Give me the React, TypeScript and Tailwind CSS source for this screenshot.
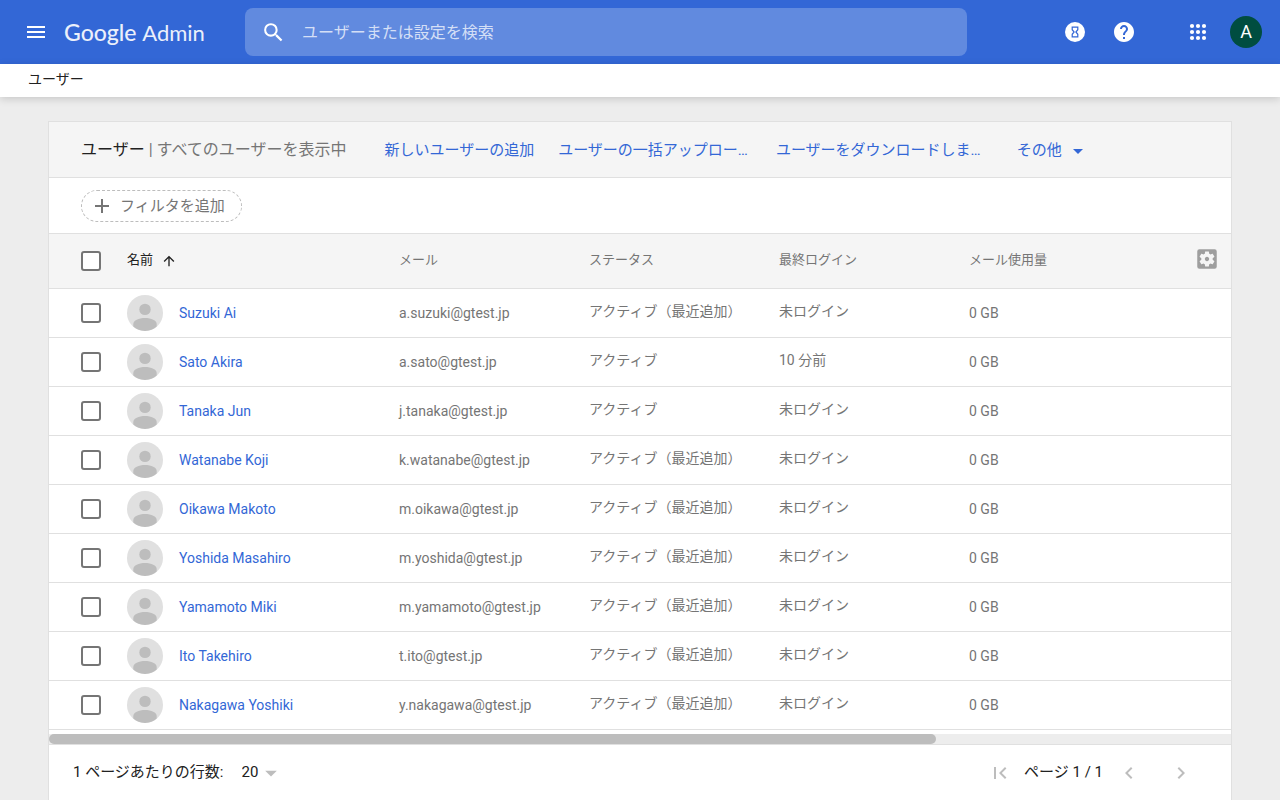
import {
    MdAdd,
    MdArrowDropDown,
    MdArrowUpward,
    MdChevronLeft,
    MdChevronRight,
    MdFirstPage,
    MdHelp,
    MdMenu,
    MdSearch,
    MdSettingsApplications,
} from 'react-icons/md'

const RECENT = 'アクティブ（最近追加）'

const users = [
    { name: 'Suzuki Ai', email: 'a.suzuki@gtest.jp', status: RECENT, login: '未ログイン' },
    { name: 'Sato Akira', email: 'a.sato@gtest.jp', status: 'アクティブ', login: '10 分前' },
    { name: 'Tanaka Jun', email: 'j.tanaka@gtest.jp', status: 'アクティブ', login: '未ログイン' },
    { name: 'Watanabe Koji', email: 'k.watanabe@gtest.jp', status: RECENT, login: '未ログイン' },
    { name: 'Oikawa Makoto', email: 'm.oikawa@gtest.jp', status: RECENT, login: '未ログイン' },
    { name: 'Yoshida Masahiro', email: 'm.yoshida@gtest.jp', status: RECENT, login: '未ログイン' },
    { name: 'Yamamoto Miki', email: 'm.yamamoto@gtest.jp', status: RECENT, login: '未ログイン' },
    { name: 'Ito Takehiro', email: 't.ito@gtest.jp', status: RECENT, login: '未ログイン' },
    { name: 'Nakagawa Yoshiki', email: 'y.nakagawa@gtest.jp', status: RECENT, login: '未ログイン' },
]

function HourglassIcon() {
    return (
        <svg width="20" height="20" viewBox="0 0 20 20" aria-hidden="true">
            <circle cx="10" cy="10" r="10" fill="#fff" />
            <path
                d="M7.2 5.200h5.600v2.500L10.900 10l1.900 2.300v2.500H7.200v-2.500L9.100 10 7.200 7.700z"
                fill="none"
                stroke="#3367d6"
                strokeWidth="1.200"
            />
        </svg>
    )
}

function AppsIcon() {
    return (
        <svg width="18" height="18" viewBox="0 0 18 18" fill="#fff" aria-hidden="true">
            {[3, 9, 15].map((y) => [3, 9, 15].map((x) => <circle key={`${x}-${y}`} cx={x} cy={y} r="2.1" />))}
        </svg>
    )
}

function Avatar() {
    return (
        <svg width="36" height="36" viewBox="0 0 36 36" className="shrink-0" aria-hidden="true">
            <circle cx="18" cy="18" r="18" fill="#e0e0e0" />
            <circle cx="18" cy="14.4" r="5.7" fill="#bdbdbd" />
            <path d="M6.3 31.6V29c0-3.600 5.400-6 11.700-6s11.700 2.400 11.700 6v2.600A18 18 0 0 1 18 36a18 18 0 0 1-11.700-4.400z" fill="#bdbdbd" />
        </svg>
    )
}

function Checkbox({ label }: { label: string }) {
    return (
        <input
            type="checkbox"
            aria-label={label}
            className="block size-5 appearance-none rounded-[3px] border-2 border-[#757575] bg-white checked:bg-[#3367d6]"
        />
    )
}

export default function App() {
    return (
        <div className="min-h-screen bg-[#ededed] font-['Roboto','Noto_Sans_CJK_JP',sans-serif] text-sm text-[#757575]">
            <header className="flex h-16 items-center bg-[#3367d6] pr-[18px] pl-6 text-white">
                <button type="button" aria-label="メニュー">
                    <MdMenu size={24} />
                </button>
                <a href="#" className="ml-4 w-[181px] shrink-0 font-['Lato',sans-serif] text-[23px] leading-8 font-medium whitespace-nowrap text-[#ebf0fb]">
                    Google <span className="text-[22px] font-normal">Admin</span>
                </a>
                <form className="flex h-12 max-w-[722px] flex-1 items-center rounded-lg bg-[#618adf] px-4">
                    <MdSearch size={25} className="shrink-0" />
                    <input
                        type="search"
                        aria-label="検索"
                        placeholder="ユーザーまたは設定を検索"
                        className="ml-4 min-w-0 flex-1 bg-transparent pt-0.5 text-base outline-none placeholder:text-[#d4dff6]"
                    />
                </form>
                <div className="ml-auto flex items-center">
                    <button type="button" aria-label="タスク">
                        <HourglassIcon />
                    </button>
                    <button type="button" aria-label="ヘルプ" className="ml-[27px]">
                        <MdHelp size={24} />
                    </button>
                    <button type="button" aria-label="アプリ" className="ml-[53px]">
                        <AppsIcon />
                    </button>
                    <button type="button" aria-label="アカウント" className="ml-[23px] size-8 rounded-full bg-[#004d40] text-lg">
                        A
                    </button>
                </div>
            </header>

            <nav className="flex h-[33px] items-center bg-white px-7 pb-1 text-sm text-[#212121] shadow-[0_2px_8px_rgba(0,0,0,0.16)]">
                ユーザー
            </nav>

            <main className="mx-12 mt-6 border border-b-0 border-[#e0e0e0] bg-white">
                <div className="flex h-14 items-center border-b border-[#e0e0e0] bg-[#f5f5f5] pl-8 whitespace-nowrap">
                    <h1 className="text-base">
                        <span className="text-[#212121]">ユーザー</span> | すべてのユーザーを表示中
                    </h1>
                    <div className="ml-[38px] flex items-center pt-0.5 text-[15px] text-[#3367d6]">
                        <a href="#">新しいユーザーの追加</a>
                        <a href="#" className="ml-6">ユーザーの一括アップロー…</a>
                        <a href="#" className="ml-7">ユーザーをダウンロードしま…</a>
                        <button type="button" className="ml-9 flex items-center gap-1">
                            その他
                            <MdArrowDropDown size={24} />
                        </button>
                    </div>
                </div>

                <div className="flex h-14 items-center border-b border-[#e0e0e0] pl-8">
                    <button
                        type="button"
                        className="flex h-8 items-center gap-1.5 rounded-full border border-dashed border-[#bdbdbd] pr-4 pl-2 text-[15px]"
                    >
                        <MdAdd size={24} />
                        <span className="pt-0.5">フィルタを追加</span>
                    </button>
                </div>

                <table className="w-full table-fixed text-left">
                    <colgroup>
                        <col className="w-[78px]" />
                        <col className="w-[272px]" />
                        <col className="w-[190px]" />
                        <col className="w-[190px]" />
                        <col className="w-[190px]" />
                        <col />
                    </colgroup>
                    <thead className="bg-[#f5f5f5] text-[13px]">
                        <tr className="h-[54px] border-b border-[#e0e0e0]">
                            <th className="pl-8"><Checkbox label="すべて選択" /></th>
                            <th className="font-normal text-[#212121]">
                                <div className="flex items-center gap-2">
                                    名前
                                    <MdArrowUpward size={16} />
                                </div>
                            </th>
                            <th className="font-normal">メール</th>
                            <th className="font-normal">ステータス</th>
                            <th className="font-normal">最終ログイン</th>
                            <th className="font-normal">
                                <div className="flex items-center justify-between pr-[11px]">
                                    メール使用量
                                    <button type="button" aria-label="列の管理" className="pb-1 text-[#9e9e9e]">
                                        <MdSettingsApplications size={26} />
                                    </button>
                                </div>
                            </th>
                        </tr>
                    </thead>
                    <tbody>
                        {users.map((u) => (
                            <tr key={u.email} className="h-[49px] border-b border-[#e0e0e0]">
                                <td className="pl-8"><Checkbox label={u.name} /></td>
                                <td>
                                    <div className="flex items-center gap-4">
                                        <Avatar />
                                        <a href="#" className="text-[#3367d6]">{u.name}</a>
                                    </div>
                                </td>
                                <td>{u.email}</td>
                                <td className="pb-1">{u.status}</td>
                                <td className="pb-1">{u.login}</td>
                                <td>0 GB</td>
                            </tr>
                        ))}
                    </tbody>
                </table>

                <div className="mt-1 h-[10px] bg-[#ededed]">
                    <div className="h-full w-3/4 rounded-full bg-[#bdbdbd]" />
                </div>

                <footer className="flex h-14 items-center border-t border-[#e0e0e0] pt-0.5 pr-[38px] pl-6 text-[15px] text-[#212121]">
                    <label htmlFor="rows">1 ページあたりの行数:</label>
                    <div className="ml-[18px] flex items-center">
                        <select id="rows" className="appearance-none bg-transparent">
                            <option>20</option>
                        </select>
                        <MdArrowDropDown size={28} className="-ml-0.5 text-[#bdbdbd]" />
                    </div>
                    <div className="ml-auto flex items-center">
                        <button type="button" aria-label="最初のページ" className="text-[#bdbdbd]">
                            <MdFirstPage size={24} />
                        </button>
                        <span className="ml-3">ページ 1 / 1</span>
                        <button type="button" aria-label="前のページ" className="ml-[14px] text-[#bdbdbd]">
                            <MdChevronLeft size={24} />
                        </button>
                        <button type="button" aria-label="次のページ" className="ml-7 text-[#bdbdbd]">
                            <MdChevronRight size={24} />
                        </button>
                    </div>
                </footer>
            </main>
        </div>
    )
}
